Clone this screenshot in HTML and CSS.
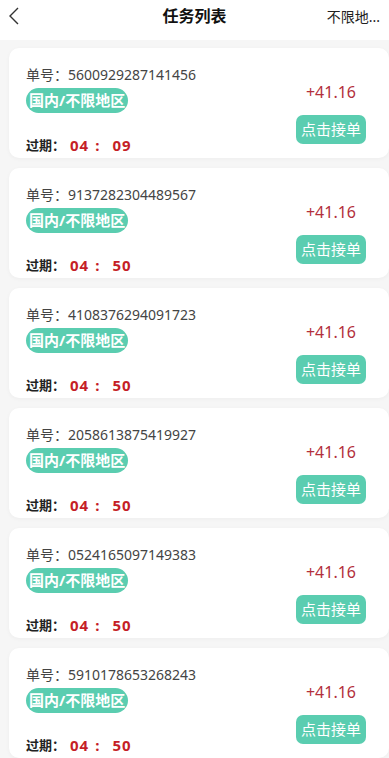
FILE: index.html
```html
<!DOCTYPE html>
<html lang="zh">
<head>
<meta charset="utf-8">
<title>任务列表</title>
<link rel="stylesheet" href="styles.css">
</head>
<body>
<div class="page">
  <header class="topbar">
    <span class="back"><svg width="12" height="18" viewBox="0 0 12 18"><path d="M10 1 L2 9 L10 17" fill="none" stroke="#333" stroke-width="1.4"/></svg></span>
    <h1 class="title">任务列表</h1>
    <span class="region">不限地...</span>
  </header>
  <main class="list">
    <div class="card">
      <div class="left">
        <div class="no">单号：5600929287141456</div>
        <div class="badge">国内/不限地区</div>
        <div class="exp"><span class="lbl">过期：</span><span class="t">04</span><span class="sep">:</span><span class="t">09</span></div>
      </div>
      <div class="right">
        <div class="amount">+41.16</div>
        <div class="btn">点击接单</div>
      </div>
    </div>
    <div class="card">
      <div class="left">
        <div class="no">单号：9137282304489567</div>
        <div class="badge">国内/不限地区</div>
        <div class="exp"><span class="lbl">过期：</span><span class="t">04</span><span class="sep">:</span><span class="t">50</span></div>
      </div>
      <div class="right">
        <div class="amount">+41.16</div>
        <div class="btn">点击接单</div>
      </div>
    </div>
    <div class="card">
      <div class="left">
        <div class="no">单号：4108376294091723</div>
        <div class="badge">国内/不限地区</div>
        <div class="exp"><span class="lbl">过期：</span><span class="t">04</span><span class="sep">:</span><span class="t">50</span></div>
      </div>
      <div class="right">
        <div class="amount">+41.16</div>
        <div class="btn">点击接单</div>
      </div>
    </div>
    <div class="card">
      <div class="left">
        <div class="no">单号：2058613875419927</div>
        <div class="badge">国内/不限地区</div>
        <div class="exp"><span class="lbl">过期：</span><span class="t">04</span><span class="sep">:</span><span class="t">50</span></div>
      </div>
      <div class="right">
        <div class="amount">+41.16</div>
        <div class="btn">点击接单</div>
      </div>
    </div>
    <div class="card">
      <div class="left">
        <div class="no">单号：0524165097149383</div>
        <div class="badge">国内/不限地区</div>
        <div class="exp"><span class="lbl">过期：</span><span class="t">04</span><span class="sep">:</span><span class="t">50</span></div>
      </div>
      <div class="right">
        <div class="amount">+41.16</div>
        <div class="btn">点击接单</div>
      </div>
    </div>
    <div class="card">
      <div class="left">
        <div class="no">单号：5910178653268243</div>
        <div class="badge">国内/不限地区</div>
        <div class="exp"><span class="lbl">过期：</span><span class="t">04</span><span class="sep">:</span><span class="t">50</span></div>
      </div>
      <div class="right">
        <div class="amount">+41.16</div>
        <div class="btn">点击接单</div>
      </div>
    </div>
  </main>
</div>
</body>
</html>
```
FILE: styles.css
```css
html, body {
  margin: 0;
  padding: 0;
}
body {
  background: #f6f6f6;
  font-family: "Noto Sans", "Noto Sans CJK SC", sans-serif;
  color: #333;
  overflow: hidden;
}
.page {
  width: 389px;
  height: 758px;
  overflow: hidden;
}
.topbar {
  height: 40px;
  background: #fff;
  display: flex;
  align-items: center;
  position: relative;
}
.back {
  display: flex;
  margin-left: 8px;
  margin-top: -8px;
}
.title {
  position: absolute;
  left: 0;
  right: 0;
  top: 0;
  margin: 0;
  text-align: center;
  font-size: 16px;
  line-height: 32px;
  font-weight: bold;
  color: #111;
  pointer-events: none;
}
.region {
  margin-left: auto;
  margin-right: 9px;
  margin-top: -8px;
  font-size: 14px;
  color: #222;
}
.list {
  padding-top: 8px;
}
.card {
  width: 380px;
  height: 110px;
  box-sizing: border-box;
  margin: 0 0 10px 9px;
  padding: 0 23px 0 17px;
  background: #fff;
  border-radius: 10px;
  box-shadow: 0 1px 4px rgba(0, 0, 0, 0.04);
  display: flex;
  justify-content: space-between;
}
.left {
  display: flex;
  flex-direction: column;
  padding-top: 17px;
}
.no {
  font-size: 14px;
  line-height: 20px;
  color: #444;
}
.badge {
  align-self: flex-start;
  margin-top: 3px;
  height: 25px;
  line-height: 25px;
  padding: 0 3px;
  border-radius: 13px;
  background: #5acdb0;
  color: #fff;
  font-weight: bold;
  font-size: 15px;
}
.exp {
  margin-top: auto;
  margin-bottom: 4px;
  line-height: 18px;
  font-size: 13px;
  font-weight: bold;
  display: flex;
  align-items: center;
}
.lbl {
  color: #222;
}
.t {
  color: #c51f27;
  font-size: 15px;
  letter-spacing: 1px;
  margin-left: 5px;
}
.sep {
  color: #c51f27;
  font-size: 15px;
  margin-left: 6px;
  margin-right: 8px;
}
.right {
  display: flex;
  flex-direction: column;
  align-items: center;
  padding-top: 34px;
}
.amount {
  font-size: 16px;
  line-height: 20px;
  color: #b3303c;
}
.btn {
  margin-top: 13px;
  width: 70px;
  height: 29px;
  line-height: 29px;
  text-align: center;
  border-radius: 7px;
  background: #5acdb0;
  color: #fff;
  font-size: 15px;
}
```
